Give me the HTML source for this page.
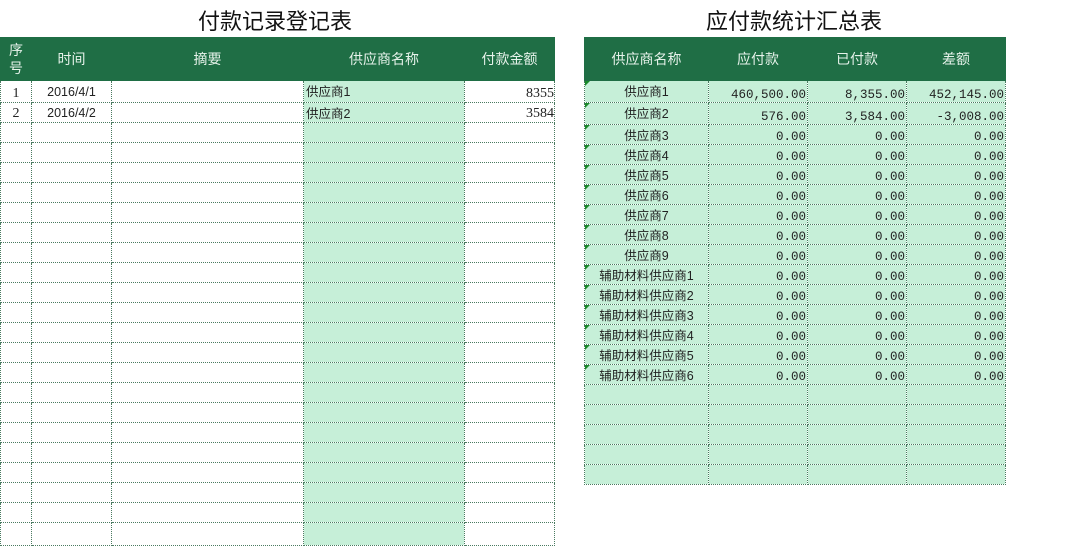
<!DOCTYPE html>
<html><head><meta charset="utf-8"><style>
body{margin:0;width:1080px;height:546px;background:#fff;position:relative;overflow:hidden;font-family:"Liberation Sans","Noto Sans CJK SC",sans-serif;}
.t{position:absolute;top:4px;font-size:22px;color:#111;}
table{position:absolute;border-collapse:collapse;table-layout:fixed;font-size:12.5px;color:#222;}
td,th{border:1px dotted #4a7a60;padding:0;overflow:hidden;white-space:nowrap;}
th{background:#1f6e45;color:#e6f2ea;font-weight:normal;font-size:14px;border:1px solid #1f6e45;height:42px;}
tr{height:20px}
.g{background:#c6efd8}
.n{text-align:right;font-family:"Liberation Serif",serif;font-size:14px;vertical-align:bottom;}
.m{text-align:right;font-family:"Liberation Mono",monospace;font-size:12.5px;vertical-align:bottom;padding-right:1px}
.c{text-align:center}
.tri{position:relative}
.tri:before{content:"";position:absolute;left:0;top:0;border-top:5px solid #1a8a2a;border-right:5px solid transparent;}
</style></head><body>
<div class="t" style="left:198px">付款记录登记表</div>
<div class="t" style="left:706px">应付款统计汇总表</div>
<table style="left:0;top:37px;width:554px">
<colgroup><col style="width:31px"><col style="width:80px"><col style="width:192px"><col style="width:161px"><col style="width:90px"></colgroup>
<tr><th style="line-height:18px">序<br>号</th><th>时间</th><th>摘要</th><th>供应商名称</th><th>付款金额</th></tr>
<tr style="height:22px"><td class="c" style="font-family:'Liberation Serif',serif;font-size:14px;vertical-align:bottom">1</td><td class="c">2016/4/1</td><td></td><td class="g" style="vertical-align:top;padding-left:2px">供应商1</td><td class="n">8355</td></tr>
<tr><td class="c" style="font-family:'Liberation Serif',serif;font-size:14px;vertical-align:bottom">2</td><td class="c">2016/4/2</td><td></td><td class="g" style="vertical-align:top;padding-left:2px">供应商2</td><td class="n">3584</td></tr>
<tr><td></td><td></td><td></td><td class="g"></td><td></td></tr>
<tr><td></td><td></td><td></td><td class="g"></td><td></td></tr>
<tr><td></td><td></td><td></td><td class="g"></td><td></td></tr>
<tr><td></td><td></td><td></td><td class="g"></td><td></td></tr>
<tr><td></td><td></td><td></td><td class="g"></td><td></td></tr>
<tr><td></td><td></td><td></td><td class="g"></td><td></td></tr>
<tr><td></td><td></td><td></td><td class="g"></td><td></td></tr>
<tr><td></td><td></td><td></td><td class="g"></td><td></td></tr>
<tr><td></td><td></td><td></td><td class="g"></td><td></td></tr>
<tr><td></td><td></td><td></td><td class="g"></td><td></td></tr>
<tr><td></td><td></td><td></td><td class="g"></td><td></td></tr>
<tr><td></td><td></td><td></td><td class="g"></td><td></td></tr>
<tr><td></td><td></td><td></td><td class="g"></td><td></td></tr>
<tr><td></td><td></td><td></td><td class="g"></td><td></td></tr>
<tr><td></td><td></td><td></td><td class="g"></td><td></td></tr>
<tr><td></td><td></td><td></td><td class="g"></td><td></td></tr>
<tr><td></td><td></td><td></td><td class="g"></td><td></td></tr>
<tr><td></td><td></td><td></td><td class="g"></td><td></td></tr>
<tr><td></td><td></td><td></td><td class="g"></td><td></td></tr>
<tr><td></td><td></td><td></td><td class="g"></td><td></td></tr>
<tr style="height:23px"><td></td><td></td><td></td><td class="g"></td><td></td></tr>
</table>
<table style="left:584px;top:37px;width:421px">
<colgroup><col style="width:124px"><col style="width:99px"><col style="width:99px"><col style="width:99px"></colgroup>
<tr><th>供应商名称</th><th>应付款</th><th>已付款</th><th>差额</th></tr>
<tr class="g" style="height:22px"><td class="c tri" style="vertical-align:top">供应商1</td><td class="m">460,500.00</td><td class="m">8,355.00</td><td class="m">452,145.00</td></tr>
<tr class="g" style="height:22px"><td class="c tri" style="vertical-align:top">供应商2</td><td class="m">576.00</td><td class="m">3,584.00</td><td class="m">-3,008.00</td></tr>
<tr class="g"><td class="c tri">供应商3</td><td class="m">0.00</td><td class="m">0.00</td><td class="m">0.00</td></tr>
<tr class="g"><td class="c tri">供应商4</td><td class="m">0.00</td><td class="m">0.00</td><td class="m">0.00</td></tr>
<tr class="g"><td class="c tri">供应商5</td><td class="m">0.00</td><td class="m">0.00</td><td class="m">0.00</td></tr>
<tr class="g"><td class="c tri">供应商6</td><td class="m">0.00</td><td class="m">0.00</td><td class="m">0.00</td></tr>
<tr class="g"><td class="c tri">供应商7</td><td class="m">0.00</td><td class="m">0.00</td><td class="m">0.00</td></tr>
<tr class="g"><td class="c tri">供应商8</td><td class="m">0.00</td><td class="m">0.00</td><td class="m">0.00</td></tr>
<tr class="g"><td class="c tri">供应商9</td><td class="m">0.00</td><td class="m">0.00</td><td class="m">0.00</td></tr>
<tr class="g"><td class="c tri">辅助材料供应商1</td><td class="m">0.00</td><td class="m">0.00</td><td class="m">0.00</td></tr>
<tr class="g"><td class="c tri">辅助材料供应商2</td><td class="m">0.00</td><td class="m">0.00</td><td class="m">0.00</td></tr>
<tr class="g"><td class="c tri">辅助材料供应商3</td><td class="m">0.00</td><td class="m">0.00</td><td class="m">0.00</td></tr>
<tr class="g"><td class="c tri">辅助材料供应商4</td><td class="m">0.00</td><td class="m">0.00</td><td class="m">0.00</td></tr>
<tr class="g"><td class="c tri">辅助材料供应商5</td><td class="m">0.00</td><td class="m">0.00</td><td class="m">0.00</td></tr>
<tr class="g"><td class="c tri">辅助材料供应商6</td><td class="m">0.00</td><td class="m">0.00</td><td class="m">0.00</td></tr>
<tr class="g"><td></td><td></td><td></td><td></td></tr>
<tr class="g"><td></td><td></td><td></td><td></td></tr>
<tr class="g"><td></td><td></td><td></td><td></td></tr>
<tr class="g"><td></td><td></td><td></td><td></td></tr>
<tr class="g"><td></td><td></td><td></td><td></td></tr>
</table>
</body></html>
